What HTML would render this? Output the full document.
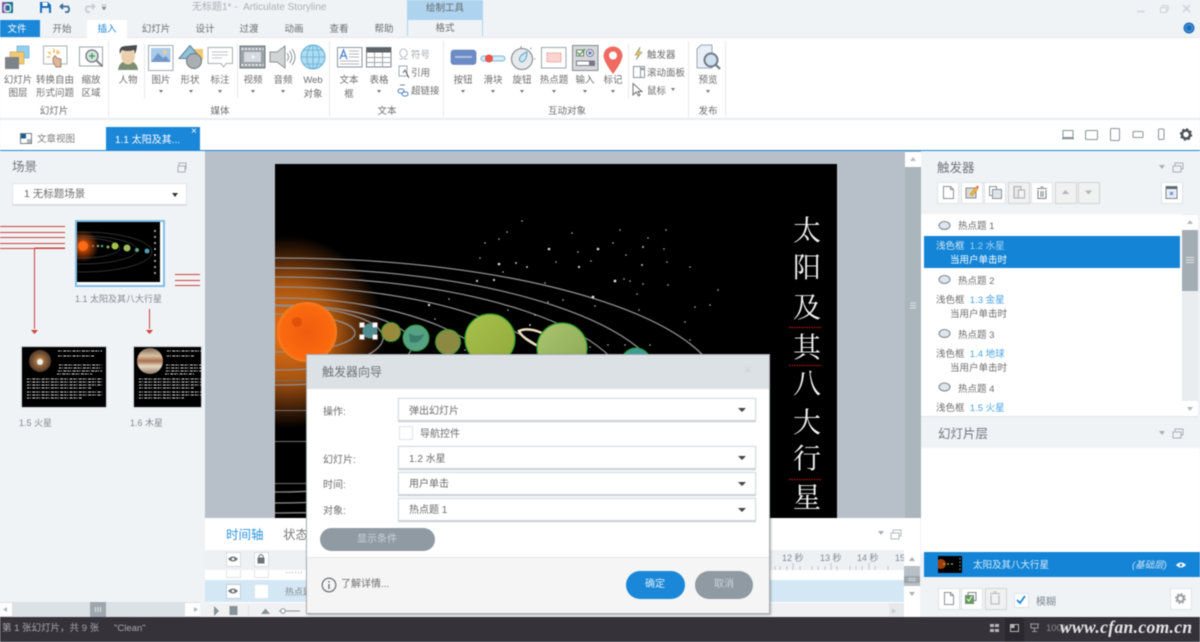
<!DOCTYPE html>
<html lang="zh-CN">
<head>
<meta charset="utf-8">
<title>Articulate Storyline</title>
<style>
html,body{margin:0;padding:0;width:1200px;height:642px;overflow:hidden;background:#eff3f6}
#r{position:relative;width:1200px;height:642px;overflow:hidden;font-family:"Liberation Sans","Noto Sans CJK SC",sans-serif;font-size:9.5px;color:#6c6c6c;filter:blur(.45px)}
.b{position:absolute}
.t{position:absolute;white-space:nowrap;line-height:12px;height:12px;margin-top:2px}
.c{transform:translateX(-50%)}
.h{font-size:12.5px;line-height:16px;height:16px;color:#6f767b;margin-top:1px}
.g{color:#a4a8ab}
.car{position:absolute;width:0;height:0;border-left:2px solid transparent;border-right:2px solid transparent;border-top:3px solid #777}
.sel{position:absolute;left:398px;width:356px;background:#fff;border:1px solid #d6dce0;border-bottom:2px solid #ccd3d8;box-shadow:0 0 1px #c8cfd4}
.sel i{position:absolute;right:9px;top:9px;width:0;height:0;border-left:4px solid transparent;border-right:4px solid transparent;border-top:4px solid #444}
.box{position:absolute;top:182px;width:20px;height:20px;background:#fff;border:1px solid #dfe3e6}
.off{background:#f0f1f1;border-color:#d2d5d6}
svg{position:absolute;left:0;top:0;overflow:hidden}
</style>
</head>
<body>
<div id="r">
<!-- chrome backgrounds -->
<div class="b" style="left:0;top:0;width:1200px;height:37px;background:#eff3f6"></div>
<div class="b" style="left:0;top:37px;width:1200px;height:81px;background:#fff;border-top:1px solid #e4e8eb"></div>
<div class="b" style="left:0;top:118px;width:1200px;height:2px;background:#e9ecee"></div>
<div class="b" style="left:0;top:120px;width:1200px;height:30px;background:#fff"></div>
<div class="b" style="left:0;top:150px;width:1200px;height:1px;background:#1a87d8"></div>
<div class="b" style="left:0;top:151px;width:205px;height:466px;background:#f0f3f6"></div>
<div class="b" style="left:205px;top:151px;width:700px;height:367px;background:#b7c0c8"></div>
<div class="b" style="left:921px;top:151px;width:279px;height:466px;background:#eff3f6"></div>
<div class="b" style="left:905px;top:151px;width:16px;height:367px;background:#aab5bc"></div>
<div class="b" style="left:905px;top:152px;width:16px;height:15px;background:#fff"></div>
<div class="b" style="left:0;top:617px;width:1200px;height:25px;background:#35323a"></div>

<!-- quick title -->
<div class="t g" style="left:192px;top:0;font-size:10px;color:#adb1b4">无标题1* -&nbsp; Articulate Storyline</div>
<div class="b" style="left:407px;top:0;width:76px;height:20px;background:#aed3ee"></div>
<div class="t c" style="left:445px;top:1px;color:#62686d">绘制工具</div>
<div class="b" style="left:407px;top:20px;width:74px;height:16px;background:#eff3f6;border:1px solid #aed3ee;border-top:0;border-bottom:0"></div>
<div class="t c" style="left:445px;top:21px">格式</div>

<!-- tabs -->
<div class="b" style="left:0;top:20px;width:40px;height:17px;background:#1a87d8"></div>
<div class="t c" style="left:17px;top:22px;color:#fff">文件</div>
<div class="b" style="left:87px;top:20px;width:40px;height:18px;background:#fff"></div>
<div class="t c" style="left:62px;top:22px">开始</div>
<div class="t c" style="left:107px;top:22px;color:#1a87d8">插入</div>
<div class="t c" style="left:156px;top:22px">幻灯片</div>
<div class="t c" style="left:205px;top:22px">设计</div>
<div class="t c" style="left:249px;top:22px">过渡</div>
<div class="t c" style="left:294px;top:22px">动画</div>
<div class="t c" style="left:339px;top:22px">查看</div>
<div class="t c" style="left:384px;top:22px">帮助</div>

<!-- ribbon labels -->
<div class="t c" style="left:18px;top:73px">幻灯片</div><div class="t c" style="left:18px;top:86px">图层</div>
<div class="t c" style="left:55px;top:73px">转换自由</div><div class="t c" style="left:55px;top:86px">形式问题</div>
<div class="t c" style="left:91px;top:73px">缩放</div><div class="t c" style="left:91px;top:86px">区域</div>
<div class="t c" style="left:54px;top:104px">幻灯片</div>
<div class="t c" style="left:128px;top:73px">人物</div>
<div class="t c" style="left:161px;top:73px">图片</div>
<div class="t c" style="left:190px;top:73px">形状</div>
<div class="t c" style="left:220px;top:73px">标注</div>
<div class="t c" style="left:253px;top:73px">视频</div>
<div class="t c" style="left:283px;top:73px">音频</div>
<div class="t c" style="left:313px;top:73px">Web</div><div class="t c" style="left:313px;top:87px">对象</div>
<div class="t c" style="left:220px;top:104px">媒体</div>
<div class="t c" style="left:349px;top:73px">文本</div><div class="t c" style="left:349px;top:87px">框</div>
<div class="t c" style="left:379px;top:73px">表格</div>
<div class="t g" style="left:411px;top:48px">符号</div>
<div class="t" style="left:411px;top:66px">引用</div>
<div class="t" style="left:411px;top:84px">超链接</div>
<div class="t c" style="left:387px;top:104px">文本</div>
<div class="t c" style="left:463px;top:73px">按钮</div>
<div class="t c" style="left:493px;top:73px">滑块</div>
<div class="t c" style="left:522px;top:73px">旋钮</div>
<div class="t c" style="left:554px;top:73px">热点题</div>
<div class="t c" style="left:585px;top:73px">输入</div>
<div class="t c" style="left:613px;top:73px">标记</div>
<div class="t" style="left:647px;top:48px">触发器</div>
<div class="t" style="left:647px;top:66px">滚动面板</div>
<div class="t" style="left:647px;top:84px">鼠标</div>
<div class="t c" style="left:567px;top:104px">互动对象</div>
<div class="t c" style="left:708px;top:73px">预览</div>
<div class="t c" style="left:708px;top:104px">发布</div>
<i class="car" style="left:159px;top:90px"></i><i class="car" style="left:189px;top:90px"></i><i class="car" style="left:218px;top:90px"></i><i class="car" style="left:251px;top:90px"></i><i class="car" style="left:281px;top:90px"></i><i class="car" style="left:377px;top:90px"></i><i class="car" style="left:461px;top:90px"></i><i class="car" style="left:491px;top:90px"></i><i class="car" style="left:520px;top:90px"></i><i class="car" style="left:552px;top:90px"></i><i class="car" style="left:583px;top:90px"></i><i class="car" style="left:611px;top:90px"></i><i class="car" style="left:671px;top:88px"></i><i class="car" style="left:706px;top:90px"></i>

<!-- tab row -->
<div class="t" style="left:37px;top:132px;color:#7b7b7b">文章视图</div>
<div class="b" style="left:106px;top:127px;width:94px;height:23px;background:#1a87d8"></div>
<div class="t" style="left:115px;top:133px;color:#fff;font-size:10px">1.1 太阳及其...</div>
<div class="t" style="left:191px;top:124px;color:#fff;font-size:10px">×</div>

<!-- top icons svg -->
<svg width="1200" height="150" viewBox="0 0 1200 150">
<!-- separators -->
<g stroke="#e6e9eb" fill="none"><path d="M108.500 41V117M329.500 41V117M443.500 41V117M688.500 41V117M725.500 41V117M144.500 44V98M237.500 44V98M628.500 44V98"/></g>
<!-- logo -->
<rect x="2" y="2" width="11" height="11" fill="#1c6f8e"/><rect x="2" y="2" width="5" height="11" fill="#7c5aa8"/><rect x="4.500" y="4.500" width="6" height="7" fill="none" stroke="#dfe" stroke-width="1.400" rx="2"/>
<!-- save -->
<path d="M40 2H48L51 5V13H40Z" fill="#1a6fb8"/><rect x="42.500" y="2.500" width="5" height="3.500" fill="#fff"/><rect x="42" y="8" width="7" height="5" fill="#e8f1f8"/>
<!-- undo / redo -->
<path d="M63 4L60.500 6.500L63 9M61 6.500H68A4 4 0 0 1 68 12H65" fill="none" stroke="#3d6f96" stroke-width="1.800"/>
<path d="M92 4L94.500 6.500L92 9M94 6.500H87A4 4 0 0 0 87 12H90" fill="none" stroke="#c8ccd0" stroke-width="1.800"/>
<path d="M101.500 5H106.500M102 7H106L104 10Z" fill="#888" stroke="#888" stroke-width=".6"/>
<!-- window btns -->
<path d="M1137 11.500H1144.500" stroke="#cfd3d6" stroke-width="1.500"/>
<rect x="1160.500" y="7.500" width="6" height="5" fill="none" stroke="#cfd3d6"/><path d="M1162.500 7.500V5.500H1168V10.500H1166.500" fill="none" stroke="#cfd3d6"/>
<path d="M1183 5L1190 12M1190 5L1183 12" stroke="#cfd3d6" stroke-width="1.500"/>
<circle cx="1189" cy="28" r="5.500" fill="#1c6fbe"/><circle cx="1189" cy="28" r="3.500" fill="none" stroke="#a9d2f2" stroke-width=".5"/>
<!-- layers -->
<rect x="17" y="46" width="12" height="12" fill="#8fd0f0" stroke="#72a9c6" stroke-width=".7"/>
<rect x="10" y="52" width="14" height="12" fill="#f3c873" stroke="#c9a457" stroke-width=".7"/>
<rect x="5" y="57" width="14" height="12" fill="#7c8489"/>
<!-- convert -->
<rect x="43.500" y="46" width="23.500" height="18" fill="#fff" stroke="#aab0b4"/>
<path d="M54 49V53M48 52L51 54M60 52L57 54M47 57H50M58 50L56.500 53" stroke="#f0a63a" stroke-width="1.200"/>
<path d="M53 58L55 55.500L57 58L61 59V67H56L53 62Z" fill="#dcb79a" stroke="#8b6b52" stroke-width=".7"/>
<!-- zoom -->
<rect x="79.500" y="47" width="23" height="19" fill="#fff" stroke="#9ea4a8"/>
<circle cx="92" cy="56" r="6" fill="#dfe3e6" stroke="#7d858a" stroke-width="1.500"/><path d="M92 53V59M89 56H95" stroke="#3aa655" stroke-width="1.400"/><path d="M96.500 60.500L102.500 66.500" stroke="#7d858a" stroke-width="2"/>
<!-- person -->
<path d="M118 70Q119 61 128 61Q137 61 138 70Z" fill="#7c8f72"/>
<ellipse cx="128" cy="56" rx="7" ry="8.500" fill="#eccfae"/>
<path d="M120 54Q118 46 126 46L137 45Q137 49 135 54L134 50Q127 52 122 50Z" fill="#4a4d50"/>
<!-- image -->
<rect x="148.500" y="45.500" width="24.500" height="25" fill="#fff" stroke="#a3a9ad"/>
<rect x="151" y="48" width="19.500" height="14" fill="#a9cbea"/>
<path d="M151 62L158 53L163 58L166 56L170.500 62Z" fill="#7296c8"/><circle cx="165" cy="52" r="2" fill="#f6c990"/>
<!-- shape -->
<rect x="190" y="49" width="13" height="11" fill="#f3c873"/>
<path d="M190 45.500L179 58.500H201Z" fill="#8ec3dc" stroke="#5d7f91"/>
<circle cx="194" cy="61" r="7.500" fill="#a9afb2" stroke="#6f777c"/>
<!-- callout -->
<path d="M208 47.500H232.500V63.500H226L223.500 67L221 63.500H208Z" fill="#fff" stroke="#a9aeb1"/>
<path d="M212 52H228M212 55H228M212 58H222" stroke="#bfc4c7"/>
<!-- video -->
<rect x="240" y="46" width="25" height="22" fill="#9aa3a8" stroke="#70797e"/>
<rect x="244" y="52" width="17" height="10" fill="#d5dade"/>
<path d="M241.500 49H263.500M241.500 65H263.500" stroke="#fff" stroke-width="1.500" stroke-dasharray="2 1.500"/>
<path d="M252 55L255 57L252 59Z" fill="#fff"/>
<!-- audio -->
<path d="M270 52H277L285 46V68L277 62H270Z" fill="#d0d4d7" stroke="#8a9196"/>
<path d="M287 53Q290 57 287 61M289.500 51Q294 57 289.500 63M292 49Q298 57 292 65" fill="none" stroke="#8a9196"/>
<!-- web -->
<circle cx="313" cy="57" r="12" fill="#aedcf2" stroke="#64aed2"/>
<ellipse cx="313" cy="57" rx="6" ry="12" fill="none" stroke="#64aed2" stroke-width=".8"/>
<path d="M313 45V69M301 57H325M303 50H323M303 64H323" stroke="#64aed2" stroke-width=".8"/>
<!-- textbox -->
<rect x="337.500" y="47.500" width="24.500" height="19.500" fill="#fff" stroke="#8f979c"/>
<path d="M340 59L343.500 50L347 59M341 56H346" fill="none" stroke="#4b84cf" stroke-width="1.300"/>
<path d="M349 51H359M349 54H359M349 57H359M340 61H359M340 64H359" stroke="#9ca3a8" stroke-width=".8"/>
<!-- table -->
<rect x="366.500" y="47.500" width="24.500" height="19.500" fill="#fff" stroke="#80888d"/>
<rect x="366.500" y="47.500" width="24.500" height="5" fill="#5c6266"/>
<path d="M366.500 57.500H391M366.500 62.500H391M374.500 52.500V67M382.500 52.500V67" stroke="#a2a8ac"/>
<!-- omega, cite, link -->
<path d="M399.500 59H402.500V57Q399 55 400 52Q401 49 403.500 49Q406 49 407 52Q408 55 404.500 57V59H407.500" fill="none" stroke="#b8bcbf" stroke-width="1"/>
<rect x="399" y="66" width="8" height="10" fill="#fff" stroke="#8c9398" stroke-width=".8"/><path d="M403 73L405 70L409 78" fill="none" stroke="#555" stroke-width=".9"/>
<rect x="398" y="89" width="6" height="4" rx="2" fill="none" stroke="#4e84bd"/><rect x="402" y="92" width="6" height="4" rx="2" fill="none" stroke="#4e84bd"/><path d="M400 85H405" stroke="#7c8488"/>
<!-- button -->
<rect x="451" y="50" width="25" height="14.500" rx="3" fill="#6d8cc7" stroke="#5873a8" stroke-width=".6"/><path d="M455 57H472" stroke="#c3d0e8" stroke-width="1.500"/>
<!-- slider -->
<rect x="481" y="56" width="24" height="5" rx="2.500" fill="#d7ecf7" stroke="#7bb5d5"/><circle cx="489" cy="58.500" r="4" fill="#e9574e"/>
<!-- dial -->
<circle cx="522" cy="59" r="10.500" fill="#e7eaec" stroke="#8a9297" stroke-width="1.200"/>
<path d="M527 52Q527 60 522 62Q518 61 520 57Q522 54 527 52Z" fill="#cfe6f1" stroke="#5da5c5"/>
<path d="M521 46V48M530 49L531.500 48M534 59H535.500" stroke="#8a9297"/>
<!-- hotspot -->
<rect x="541.500" y="47.500" width="24.500" height="20.500" fill="#fff" stroke="#9ea5aa"/>
<rect x="547" y="53" width="14" height="9" fill="#fbd3cf" stroke="#e98f88" stroke-dasharray="1.500 1"/>
<!-- input -->
<rect x="572.500" y="45.500" width="25.500" height="25" fill="#d5d8da" stroke="#848b90"/>
<rect x="576.500" y="50" width="7" height="6" fill="#fff" stroke="#777"/><path d="M577.500 52L579.500 55L585 49" fill="none" stroke="#4fa24a" stroke-width="1.300"/>
<circle cx="590" cy="53" r="3.500" fill="#fff" stroke="#778"/><circle cx="590" cy="53" r="1.800" fill="#5a7fc0"/>
<rect x="576.500" y="61" width="18" height="4.500" fill="#fff" stroke="#778"/><rect x="589" y="61" width="5.500" height="4.500" fill="#778"/>
<!-- pin -->
<path d="M613 74Q604 62 603.500 56A9.500 9.500 0 0 1 622.500 56Q622 62 613 74Z" fill="#ef6a60"/><circle cx="613" cy="55.500" r="4" fill="#fff"/>
<!-- trigger bolt, panel, cursor -->
<path d="M640 47L635 55H638L636 60L642 52H639Z" fill="#e8c24a" stroke="#8b8f91" stroke-width=".6"/>
<rect x="633.500" y="66.500" width="11" height="11" fill="#fff" stroke="#8c9398"/><path d="M640.500 66.500V77.500" stroke="#8c9398"/><rect x="641" y="68" width="3" height="2" fill="#8c9398"/>
<path d="M633 83.500V95L636 92L638.500 96L640 95L638 91.500H642Z" fill="#fff" stroke="#666" stroke-width=".9"/>
<!-- preview -->
<path d="M697 49L701 45H712V68H697Z" fill="#e9eff6" stroke="#9aa8b8"/>
<circle cx="711" cy="60" r="6.500" fill="#cfe0f0" stroke="#6f7c86" stroke-width="2"/><path d="M715.500 64.500L720 69" stroke="#6f7c86" stroke-width="2.200"/>
<!-- story view icon -->
<rect x="20.500" y="133.500" width="11" height="10" fill="#fff" stroke="#778087"/><rect x="21" y="134" width="5" height="4.500" fill="#1a5c8c"/><rect x="27" y="139" width="4" height="4" fill="#aeb4b8"/>
<!-- device icons -->
<g fill="none" stroke="#8a9298">
<rect x="1063" y="130.500" width="10" height="7"/><path d="M1062 138.500H1074" stroke-width="1.500"/>
<rect x="1085.500" y="130.500" width="12" height="9" rx="1"/>
<rect x="1110.500" y="128.500" width="9" height="12" rx="1"/>
<rect x="1133" y="131.500" width="10" height="6" rx="1"/>
<rect x="1158.500" y="129" width="5.500" height="10.500" rx="1"/></g>
<g transform="translate(1186,134.500)"><circle r="4" fill="none" stroke="#4c5358" stroke-width="2.500"/><circle r="5.500" fill="none" stroke="#4c5358" stroke-width="1.500" stroke-dasharray="2.200 2.120"/></g>
</svg>

<!-- LEFT: scenes -->
<div class="t h" style="left:12px;top:158px">场景</div>
<svg width="205" height="470" viewBox="0 0 205 470" style="left:0;top:151px">
<rect x="179" y="12" width="7" height="6" fill="none" stroke="#aab1b6"/><rect x="178" y="15" width="7" height="6" fill="#f0f3f6" stroke="#aab1b6"/>
<g stroke="#c8403c" fill="none">
<path d="M0 75.500H65M0 81.500H65M0 86.500H65M0 92.500H65M0 97.500H65"/>
<path d="M34.500 97H65M34.500 97V178"/>
<path d="M175 123.500H200M175 129.500H200M175 134.500H200"/>
<path d="M149.500 158V178"/></g>
<path d="M31 179H38L34.500 183Z M146 179H153L149.500 183Z" fill="#c9423d"/>
</svg>
<div class="b" style="left:12px;top:183px;width:173px;height:20px;background:#fff;border:1px solid #dfe4e8;border-bottom:2px solid #d9dee2"></div>
<div class="t" style="left:24px;top:186px;font-size:10.500px">1 无标题场景</div>
<div class="b" style="left:172px;top:193px;width:0;height:0;border-left:3px solid transparent;border-right:3px solid transparent;border-top:4px solid #333"></div>

<div class="b" style="left:75px;top:220px;width:86px;height:63px;border:2px solid #7fbde8;background:#fff"></div>
<svg width="83" height="60" viewBox="0 0 83 60" style="left:77px;top:222px;background:#000">
<defs><radialGradient id="gl"><stop offset="0" stop-color="#ff6a10"/><stop offset=".4" stop-color="#a13c05"/><stop offset="1" stop-color="#000"/></radialGradient></defs>
<circle cx="6" cy="24" r="16" fill="url(#gl)"/><circle cx="6" cy="24" r="5" fill="#ff6a14"/>
<g fill="none" stroke="#5c5c5c" stroke-width=".5"><ellipse cx="5" cy="30" rx="70" ry="20"/><ellipse cx="5" cy="28" rx="55" ry="14"/><ellipse cx="5" cy="26" rx="38" ry="10"/></g>
<circle cx="16" cy="24" r="1" fill="#69a"/><circle cx="21" cy="24" r="1.200" fill="#9a7"/><circle cx="25" cy="24" r="1.300" fill="#4a8"/><circle cx="31" cy="25" r="1.500" fill="#9a5"/><circle cx="38" cy="24" r="3.500" fill="#a4c24a"/><circle cx="50" cy="26" r="3.500" fill="#9fbd5c"/><circle cx="60" cy="28" r="2" fill="#5aaa8a"/><circle cx="70" cy="29" r="2.500" fill="#4f9fae"/>
<path d="M78 8V52" stroke="#ccc" stroke-width="1.500" stroke-dasharray="2 4"/>
</svg>
<div class="t" style="left:75px;top:291px;font-size:9px;color:#83898d">1.1 太阳及其八大行星</div>

<svg width="84" height="60" viewBox="0 0 84 60" style="left:22px;top:347px;background:#000;outline:1px solid #d5d9dc">
<defs><radialGradient id="mars"><stop offset="0" stop-color="#d8c7a8"/><stop offset=".4" stop-color="#9c6b3e"/><stop offset="1" stop-color="#4f3a28"/></radialGradient><linearGradient id="jup" x2="0" y2="1"><stop offset="0" stop-color="#7c6a58"/><stop offset=".3" stop-color="#d9c2a2"/><stop offset=".5" stop-color="#a86f52"/><stop offset=".7" stop-color="#e6d9c3"/><stop offset="1" stop-color="#8c7a68"/></linearGradient></defs>
<circle cx="18" cy="14" r="11" fill="url(#mars)"/><circle cx="18" cy="15" r="3" fill="#eee"/>
<g stroke="#ddd" stroke-width="1" stroke-dasharray="2 .8 1 1.500 3 1" fill="none"><path d="M36 4H80M36 9H72M37 18H80M37 21H80M36 24H80M35 27H70M5 32H80M5 35H80M5 38H80M5 41H70M5 45H80M5 48H80M5 51H60"/></g>
</svg>
<svg width="67" height="60" viewBox="0 0 67 60" style="left:134px;top:347px;background:#000;outline:1px solid #d5d9dc">
<circle cx="16" cy="14" r="13" fill="url(#jup)"/>
<g stroke="#ddd" stroke-width="1" stroke-dasharray="2 .8 1 1.500 3 1" fill="none"><path d="M33 4H67M33 9H60M32 18H67M32 21H67M32 24H67M31 27H60M5 32H67M5 35H67M5 38H67M5 41H60M5 45H67M5 48H67M5 51H50"/></g>
</svg>
<div class="t" style="left:19px;top:415px;font-size:9px;color:#83898d">1.5 火星</div>
<div class="t" style="left:130px;top:415px;font-size:9px;color:#83898d">1.6 木星</div>

<!-- left scrollbar -->
<div class="b" style="left:0;top:602px;width:200px;height:15px;background:#dce1e5"></div>
<div class="b" style="left:0;top:603px;width:12px;height:13px;background:#fff"></div>
<div class="b" style="left:185px;top:603px;width:15px;height:13px;background:#fff"></div>
<div class="b" style="left:90px;top:602px;width:16px;height:15px;background:#9da7ad"></div>
<svg width="205" height="15" viewBox="0 0 205 15" style="left:0;top:602px"><path d="M3 7.500L7 5V10Z M194 5L198 7.500L194 10Z" fill="#b0b5b8"/><path d="M95.500 5V10M98 5V10M100.500 5V10" stroke="#e4e8ea"/></svg>

<!-- STAGE -->
<svg width="562" height="354" viewBox="275 164 562 354" style="left:275px;top:164px;background:#000">
<defs>
<radialGradient id="glow" gradientUnits="userSpaceOnUse" cx="288" cy="332" r="96"><stop offset="0" stop-color="#e8741a"/><stop offset=".5" stop-color="#a8540f"/><stop offset=".75" stop-color="#50270a"/><stop offset="1" stop-color="#000"/></radialGradient>
<radialGradient id="sun" cx=".5" cy=".5" r=".5"><stop offset="0" stop-color="#f05c10"/><stop offset=".88" stop-color="#fb6a0e"/><stop offset="1" stop-color="#f47f22"/></radialGradient>
<linearGradient id="p5" x2="1" y2="1"><stop offset="0" stop-color="#a9c24c"/><stop offset="1" stop-color="#8fa83a"/></linearGradient>
<linearGradient id="p6" x2="1" y2="1"><stop offset="0" stop-color="#acc46e"/><stop offset="1" stop-color="#88a855"/></linearGradient>
</defs>
<circle cx="288" cy="332" r="96" fill="url(#glow)"/>
<g fill="none" stroke="#8d8d8d" stroke-width="1.300">
<ellipse cx="280" cy="395" rx="442" ry="137"/>
<ellipse cx="280" cy="395" rx="386" ry="127"/>
<ellipse cx="280" cy="395" rx="349" ry="118"/>
<ellipse cx="280" cy="395" rx="290" ry="108"/>
<ellipse cx="280" cy="395" rx="227" ry="97"/>
<ellipse cx="280" cy="345" rx="132" ry="40"/>
<ellipse cx="280" cy="338" rx="103" ry="32"/>
<ellipse cx="280" cy="333" rx="75" ry="19"/>
</g>
<path d="M275 380.500H306M275 410.500H306M275 441.500H306M275 483.500H306" stroke="#6f6f6f"/>
<g fill="#bdbdbd">
<circle cx="522" cy="221" r=".8"/><circle cx="507" cy="232" r=".8"/><circle cx="485" cy="243" r=".8"/><circle cx="499" cy="239" r=".8"/><circle cx="572" cy="233" r=".8"/><circle cx="620" cy="230" r=".8"/><circle cx="666" cy="230" r=".8"/><circle cx="648" cy="238" r=".8"/><circle cx="613" cy="243" r=".8"/><circle cx="549" cy="249" r="1.300" fill="#ddd"/><circle cx="578" cy="252" r=".8"/><circle cx="598" cy="249" r="1.300" fill="#ddd"/><circle cx="643" cy="247" r="1"/><circle cx="664" cy="249" r=".8"/><circle cx="626" cy="255" r=".8"/><circle cx="480" cy="258" r=".8"/><circle cx="499" cy="264" r="1.300" fill="#ddd"/><circle cx="516" cy="263" r="1"/><circle cx="527" cy="267" r="1"/><circle cx="556" cy="262" r=".8"/><circle cx="579" cy="267" r="1.200"/><circle cx="591" cy="261" r=".8"/><circle cx="642" cy="265" r="1"/><circle cx="667" cy="262" r=".8"/><circle cx="690" cy="267" r=".8"/><circle cx="503" cy="272" r=".8"/><circle cx="545" cy="283" r=".8"/><circle cx="624" cy="279" r=".8"/><circle cx="477" cy="281" r="1.200"/><circle cx="494" cy="280" r="1.200"/><circle cx="615" cy="281" r="1.400" fill="#ddd"/><circle cx="630" cy="281" r=".8"/><circle cx="643" cy="284" r=".8"/><circle cx="668" cy="285" r=".8"/><circle cx="718" cy="290" r=".8"/><circle cx="593" cy="297" r="1.400" fill="#ddd"/><circle cx="637" cy="294" r=".8"/><circle cx="429" cy="305" r="1.200" fill="#ddd"/><circle cx="449" cy="299" r=".8"/><circle cx="548" cy="302" r=".8"/><circle cx="563" cy="300" r=".8"/><circle cx="595" cy="306" r=".8"/><circle cx="639" cy="310" r=".8"/><circle cx="695" cy="307" r=".8"/><circle cx="710" cy="305" r=".8"/><circle cx="508" cy="310" r=".8"/><circle cx="435" cy="319" r=".8"/><circle cx="535" cy="315" r=".8"/><circle cx="685" cy="322" r=".8"/><circle cx="530" cy="325" r="1"/><circle cx="590" cy="347" r=".8"/><circle cx="608" cy="345" r=".8"/><circle cx="625" cy="345" r=".8"/><circle cx="650" cy="345" r=".8"/><circle cx="690" cy="340" r=".8"/><circle cx="465" cy="350" r=".8"/>
</g>
<circle cx="307" cy="332" r="30" fill="url(#sun)"/>
<circle cx="297" cy="322" r="5" fill="#d44a0a" opacity=".7"/>
<circle cx="370" cy="331" r="7.500" fill="#4f8d90"/>
<g fill="#fff" stroke="#888" stroke-width=".5"><rect x="359.500" y="322.500" width="5" height="5"/><rect x="372.500" y="322.500" width="5" height="5"/><rect x="359.500" y="334.500" width="5" height="5"/><rect x="372.500" y="334.500" width="5" height="5"/></g>
<circle cx="391" cy="332" r="9.500" fill="#9a8a3c" stroke="#2e9a2f" stroke-width="1"/>
<circle cx="416" cy="338" r="13" fill="#56a084" stroke="#2e9a2f" stroke-width="1"/><path d="M409 333Q417 338 424 334Q420 345 410 342Z" fill="#2c6f5e" opacity=".7"/>
<circle cx="448" cy="342" r="12.500" fill="#8c8a42" stroke="#2e9a2f" stroke-width="1"/>
<circle cx="490" cy="339" r="25" fill="url(#p5)" stroke="#2e9a2f" stroke-width="1.300"/>
<path d="M542 333Q528 327 519 331Q522 338 538 346" fill="none" stroke="#efdfc0" stroke-width="2.500"/>
<circle cx="562" cy="348" r="25" fill="url(#p6)" stroke="#2e9a2f" stroke-width="1.300"/>
<circle cx="636" cy="363" r="15" fill="#3a9c96" stroke="#2e9a2f"/>
<g fill="none" stroke="#b01818" stroke-width="1.300" stroke-dasharray="1.500 1"><path d="M789 327.500H822M789 365.500H822M789 479.500H822"/></g>
<g font-family="'Noto Serif CJK SC','Liberation Serif',serif" font-size="28" fill="#f4f4f4" text-anchor="middle">
<text x="807" y="240">太</text><text x="807" y="277">阳</text><text x="807" y="317">及</text><text x="807" y="357">其</text><text x="807" y="393">八</text><text x="807" y="432">大</text><text x="807" y="468">行</text><text x="807" y="507">星</text>
</g>
</svg>
<svg width="16" height="367" viewBox="0 0 16 367" style="left:905px;top:151px"><path d="M5 10L8 6L11 10Z" fill="#bbb"/><path d="M5 152H11M5 154.500H11M5 157H11" stroke="#dfe3e6"/></svg>

<!-- TIMELINE -->
<div class="b" style="left:205px;top:518px;width:715px;height:99px;background:#fff"></div>
<div class="t" style="left:226px;top:525px;font-size:12.500px;line-height:16px;height:16px;color:#2e95df">时间轴</div>
<div class="t" style="left:283px;top:525px;font-size:12.500px;line-height:16px;height:16px;color:#777">状态</div>
<div class="b" style="left:205px;top:550px;width:700px;height:20px;background:#eef1f4"></div>
<div class="b" style="left:205px;top:580px;width:700px;height:22px;background:#d4e7f5"></div>
<div class="b" style="left:205px;top:603px;width:700px;height:14px;background:#eff1f3"></div>
<div class="b" style="left:226px;top:552px;width:13px;height:13px;background:#fff;border:1px solid #d6dce0"></div>
<div class="b" style="left:254px;top:552px;width:13px;height:13px;background:#fff;border:1px solid #d6dce0"></div>
<div class="b" style="left:226px;top:570px;width:13px;height:7px;background:#fff;border:1px solid #e1e4e6;border-top:0"></div>
<div class="b" style="left:254px;top:570px;width:13px;height:7px;background:#fff;border:1px solid #e1e4e6;border-top:0"></div>
<div class="b" style="left:226px;top:584px;width:13px;height:13px;background:#fff;border:1px solid #c3ced6"></div>
<div class="b" style="left:254px;top:584px;width:13px;height:13px;background:#fff;border:1px solid #dce5ec"></div>
<div class="t" style="left:285px;top:562px;font-size:9px;color:#999">……</div>
<div class="t" style="left:285px;top:584px;font-size:9px;color:#888">热点题</div>
<div class="t" style="left:782px;top:550px;font-size:9px;color:#7f8a92">12 秒</div>
<div class="t" style="left:820px;top:550px;font-size:9px;color:#7f8a92">13 秒</div>
<div class="t" style="left:857px;top:550px;font-size:9px;color:#7f8a92">14 秒</div>
<div class="t" style="left:895px;top:550px;font-size:9px;color:#7f8a92">15</div>
<div class="b" style="left:904px;top:550px;width:16px;height:67px;background:#fff"></div>
<div class="b" style="left:904px;top:566px;width:16px;height:20px;background:#b7c0c6"></div>
<div class="b" style="left:904px;top:576px;width:16px;height:7px;background:#9aa4ab"></div>
<div class="b" style="left:889px;top:603px;width:15px;height:14px;background:#e6e9eb"></div>
<svg width="1200" height="642" viewBox="0 0 1200 642" style="left:0;top:0">
<path d="M878 531H884L881 535Z" fill="#a7afb4"/>
<rect x="893" y="530" width="8" height="6" fill="none" stroke="#b3b9bd"/><rect x="891" y="533" width="8" height="6" fill="#fff" stroke="#b3b9bd"/>
<path d="M775 566V570M780 566V570M793 563V570M787 566V570M800 566V570M812 566V570M831 563V570M818 566V570M825 566V570M837 566V570M850 566V570M869 563V570M856 566V570M862 566V570M875 566V570M888 566V570" stroke="#c2c7ca"/>
<path d="M909 561L912 557L915 561Z M909 592H915L912 596Z" fill="#aab0b4"/>
<path d="M908 578.500H916M908 580.500H916" stroke="#d3d7da"/>
<path d="M892 608.500L896 611L892 613.500Z" fill="#c3c7ca"/>
<!-- eyes and lock -->
<g fill="#6d7479"><path d="M228 559Q233 554 238 559Q233 564 228 559Z"/><path d="M228 591Q233 586 238 591Q233 596 228 591Z"/><rect x="257.500" y="557.500" width="7" height="6"/><path d="M259 557.500V556Q261 553 263 556V557.500" fill="none" stroke="#6d7479"/></g>
<circle cx="233" cy="559" r="1.300" fill="#fff"/><circle cx="233" cy="591" r="1.300" fill="#fff"/>
<!-- playback -->
<path d="M214 606L219 611L214 616Z" fill="#8a9297"/><rect x="229.500" y="606" width="8" height="9" fill="#8a9297"/>
<path d="M261 614L265.500 608.500L270 614Z" fill="#8a9297"/>
<circle cx="283" cy="611" r="2.300" fill="#fff" stroke="#8a9297"/><path d="M279 611H280.500M285 611H300" stroke="#8a9297"/>
<path d="M248.500 605V616" stroke="#dfe2e4"/>
<path d="M306 610H330" stroke="#c8cdd0" stroke-width="2"/>
</svg>

<!-- RIGHT: triggers -->
<div class="t h" style="left:937px;top:159px">触发器</div>
<div class="box" style="left:937px"></div><div class="box" style="left:961px"></div><div class="box" style="left:984px"></div><div class="box off" style="left:1008px"></div><div class="box" style="left:1031px"></div><div class="box off" style="left:1055px"></div><div class="box off" style="left:1078px"></div><div class="box" style="left:1161px"></div>
<svg width="1200" height="215" viewBox="0 0 1200 215" style="left:0;top:0">
<path d="M1159 165H1165L1162 169Z" fill="#a7afb4"/>
<rect x="1175" y="163" width="8" height="6" fill="none" stroke="#aab1b6"/><rect x="1173" y="166" width="8" height="6" fill="#eff3f6" stroke="#aab1b6"/>
<path d="M943.500 186.500H950.500L953.500 189.500V198.500H943.500Z M950.500 186.500V189.500H953.500" fill="#fff" stroke="#8a9297"/>
<rect x="966" y="188" width="10" height="10" fill="#d9dbd2" stroke="#888"/><path d="M970 194L976 187L978 189L972 196Z" fill="#f3b63c" stroke="#99702a" stroke-width=".5"/><circle cx="977.500" cy="187" r="1.200" fill="#e7635b"/>
<rect x="989.500" y="186.500" width="7" height="9" fill="#fff" stroke="#8a9297"/><rect x="992.500" y="189.500" width="9" height="9" fill="#dfe4ea" stroke="#8a9297"/>
<rect x="1014" y="186.500" width="7" height="11.500" fill="#e7e8e8" stroke="#a9aeb1"/><rect x="1018.500" y="190" width="6" height="8" fill="#f4f4f4" stroke="#a9aeb1"/>
<path d="M1037 188.500H1047M1038 190V198.500H1046V190M1040.500 187H1043.500M1041 191V197M1043 191V197" fill="none" stroke="#7c858a" stroke-width="1.100"/>
<path d="M1062 194L1065.500 190L1069 194Z M1085 190.500H1092L1088.500 194.500Z" fill="#b0b5b8"/>
<rect x="1166" y="186.500" width="11" height="12" fill="#e8ecf6" stroke="#7c858a"/><rect x="1166" y="186.500" width="11" height="2.500" fill="#60686d"/><path d="M1170 192L1173 195M1173 192L1170 195" stroke="#5a7fc0"/>
</svg>

<div class="b" style="left:921px;top:214px;width:277px;height:202px;background:#fff;overflow:hidden;border-bottom:1px solid #e2e6e9">
<div class="b" style="left:3px;top:22px;width:256px;height:32px;background:#1485d6"></div>
<svg width="30" height="200" viewBox="0 0 30 200" style="left:16px;top:0">
<g fill="#dde6ef" stroke="#79838c"><ellipse cx="7.500" cy="11.500" rx="5.500" ry="4"/><ellipse cx="7.500" cy="65.500" rx="5.500" ry="4"/><ellipse cx="7.500" cy="119.500" rx="5.500" ry="4"/><ellipse cx="7.500" cy="173" rx="5.500" ry="4"/></g></svg>
<div class="t" style="left:37px;top:5px">热点题 1</div>
<div class="t" style="left:15px;top:25px;color:#d3e8f7">浅色框 <span style="color:#a3d2f3">&nbsp;1.2 水星</span></div>
<div class="t" style="left:29px;top:39px;color:#fff">当用户单击时</div>
<div class="t" style="left:37px;top:60px">热点题 2</div>
<div class="t" style="left:15px;top:79px">浅色框 <span style="color:#4aa3e2">&nbsp;1.3 金星</span></div>
<div class="t" style="left:29px;top:93px">当用户单击时</div>
<div class="t" style="left:37px;top:114px">热点题 3</div>
<div class="t" style="left:15px;top:133px">浅色框 <span style="color:#4aa3e2">&nbsp;1.4 地球</span></div>
<div class="t" style="left:29px;top:147px">当用户单击时</div>
<div class="t" style="left:37px;top:168px">热点题 4</div>
<div class="t" style="left:15px;top:187px">浅色框 <span style="color:#4aa3e2">&nbsp;1.5 火星</span></div>
<div class="b" style="left:261px;top:0;width:16px;height:202px;background:#e9edf0"></div>
<div class="b" style="left:261px;top:1px;width:16px;height:15px;background:#fff"></div>
<div class="b" style="left:261px;top:16px;width:16px;height:61px;background:#a3adb3"></div>
<div class="b" style="left:261px;top:187px;width:16px;height:15px;background:#fff"></div>
<svg width="16" height="202" viewBox="0 0 16 202" style="left:261px;top:0"><path d="M5 10L8 6L11 10Z M5 193H11L8 197Z" fill="#b4b9bc"/><path d="M3 43.500H11M3 46H11M3 48.500H11" stroke="#dfe3e6" transform="translate(1,0)"/></svg>
</div>

<!-- layers -->
<div class="t h" style="left:938px;top:425px">幻灯片层</div>
<svg width="1200" height="642" viewBox="0 0 1200 642" style="left:0;top:0">
<path d="M1159 431H1165L1162 435Z" fill="#a7afb4"/>
<rect x="1175" y="429" width="8" height="6" fill="none" stroke="#aab1b6"/><rect x="1173" y="432" width="8" height="6" fill="#eff3f6" stroke="#aab1b6"/>
</svg>
<div class="b" style="left:921px;top:448px;width:279px;height:105px;background:#fff"></div>
<div class="b" style="left:924px;top:552px;width:276px;height:25px;background:#1485d6"></div>
<svg width="24" height="17" viewBox="0 0 24 17" style="left:938px;top:556px;background:#000"><circle cx="3" cy="8" r="5" fill="#a33d08"/><path d="M5 8H17" stroke="#9aa84a" stroke-dasharray="2 2" stroke-width="1.500"/><path d="M22 2V15" stroke="#aaa" stroke-dasharray="1.500 2"/></svg>
<div class="t" style="left:973px;top:558px;color:#d9ecfa">太阳及其八大行星</div>
<div class="t" style="left:1132px;top:558px;color:#cbe3f6;font-style:italic">(基础层)</div>
<svg width="1200" height="642" viewBox="0 0 1200 642" style="left:0;top:0">
<path d="M1176 565Q1181 560 1186 565Q1181 570 1176 565Z" fill="#fff"/><circle cx="1181" cy="565" r="1.300" fill="#1485d6"/>
</svg>
<div class="b" style="left:938px;top:588px;width:20px;height:20px;background:#fff;border:1px solid #dfe3e6"></div>
<div class="b" style="left:961px;top:588px;width:20px;height:20px;background:#fff;border:1px solid #dfe3e6"></div>
<div class="b" style="left:985px;top:588px;width:20px;height:20px;background:#f0f1f1;border:1px solid #d2d5d6"></div>
<div class="b" style="left:1014px;top:593px;width:13px;height:13px;background:#fff;border:1px solid #dfe3e6"></div>
<div class="t" style="left:1036px;top:595px;color:#7e8890;font-size:10px">模糊</div>
<div class="b" style="left:1170px;top:588px;width:20px;height:20px;background:#fff;border:1px solid #dfe3e6"></div>
<svg width="1200" height="642" viewBox="0 0 1200 642" style="left:0;top:0">
<path d="M944.500 592.500H950.500L953.500 595.500V604.500H944.500Z M950.500 592.500V595.500H953.500" fill="#fff" stroke="#8a9297"/>
<rect x="968" y="592.500" width="8" height="8" fill="#fff" stroke="#7c858a"/><rect x="965.500" y="595.500" width="8" height="8" fill="#5ca04d" stroke="#7c858a"/><path d="M967 599L969 601L972 596" fill="none" stroke="#fff"/>
<path d="M990 593.500H1000M991 595V604H999V595M993.500 592H996.500" fill="none" stroke="#b3b7ba" stroke-width="1.100"/>
<path d="M1017 600L1020 603L1025 596" fill="none" stroke="#1a87d8" stroke-width="1.800"/>
<g transform="translate(1180.500,598.500)"><circle r="3.200" fill="none" stroke="#9aa1a6" stroke-width="2.200"/><circle r="4.800" fill="none" stroke="#9aa1a6" stroke-width="1.300" stroke-dasharray="2 1.770"/></g>
</svg>

<!-- DIALOG -->
<div class="b" style="left:306px;top:354px;width:462px;height:258px;background:#fff;border:1px solid #a9adb0;box-shadow:1px 1px 2px rgba(0,0,0,.3)"></div>
<div class="b" style="left:307px;top:355px;width:462px;height:34px;background:#dce1e5"></div>
<div class="b" style="left:307px;top:557px;width:462px;height:55px;background:#f5f5f5;border-top:1px solid #e4e6e7"></div>
<div class="t" style="left:322px;top:363px;font-size:12px;line-height:14px;height:14px;color:#6d7378">触发器向导</div>
<div class="t" style="left:744px;top:362px;font-size:13px;color:#cdd2d5">×</div>
<div class="t" style="left:323px;top:405px;font-size:10px">操作:</div>
<div class="sel" style="top:398px;height:21px"><i></i></div>
<div class="t" style="left:409px;top:404px;font-size:10px">弹出幻灯片</div>
<div class="b" style="left:399px;top:426px;width:12px;height:12px;background:#fff;border:1px solid #dfe2e4"></div>
<div class="t" style="left:420px;top:427px;font-size:10px">导航控件</div>
<div class="t" style="left:323px;top:453px;font-size:10px">幻灯片:</div>
<div class="sel" style="top:446px;height:21px"><i></i></div>
<div class="t" style="left:409px;top:452px;font-size:10px">1.2 水星</div>
<div class="t" style="left:323px;top:478px;font-size:10px">时间:</div>
<div class="sel" style="top:472px;height:21px"><i></i></div>
<div class="t" style="left:409px;top:477px;font-size:10px">用户单击</div>
<div class="t" style="left:323px;top:504px;font-size:10px">对象:</div>
<div class="sel" style="top:498px;height:21px"><i></i></div>
<div class="t" style="left:409px;top:503px;font-size:10px">热点题 1</div>
<div class="b" style="left:320px;top:528px;width:115px;height:23px;background:#8f9aa3;border-radius:12px"></div>
<div class="t c" style="left:377px;top:532px;font-size:10px;color:#ced3d8">显示条件</div>
<svg width="20" height="20" viewBox="0 0 20 20" style="left:321px;top:577px"><circle cx="8" cy="8" r="6.800" fill="none" stroke="#5d666c" stroke-width="1.100"/><path d="M8 7V12M8 4V5.500" stroke="#5d666c" stroke-width="1.300"/></svg>
<div class="t" style="left:341px;top:577px;font-size:10px">了解详情...</div>
<div class="b" style="left:626px;top:571px;width:59px;height:28px;background:#1a87d8;border-radius:14px"></div>
<div class="t c" style="left:655px;top:577px;font-size:10px;color:#dcedf9">确定</div>
<div class="b" style="left:695px;top:571px;width:58px;height:28px;background:#8f9aa3;border-radius:14px"></div>
<div class="t c" style="left:724px;top:577px;font-size:10px;color:#cfd4d8">取消</div>

<!-- STATUS -->
<div class="t" style="left:2px;top:621px;color:#a8a8aa">第 1 张幻灯片，共 9 张</div>
<div class="t" style="left:114px;top:621px;color:#a8a8aa;font-size:9.500px">"Clean"</div>
<div class="b" style="left:1005px;top:618px;width:19px;height:24px;background:#2b282f"></div>
<svg width="1200" height="642" viewBox="0 0 1200 642" style="left:0;top:0">
<g fill="#b8b8b8"><rect x="990" y="624" width="4" height="3"/><rect x="995" y="624" width="4" height="3"/><rect x="990" y="629" width="4" height="3"/><rect x="995" y="629" width="4" height="3"/></g>
<rect x="1010.500" y="624.500" width="8" height="7" fill="none" stroke="#b8b8b8"/><rect x="1011" y="625" width="3.500" height="3" fill="#b8b8b8"/>
<path d="M1030 624H1039M1031 624V628H1038V624M1034.500 628V631M1032 631.500H1037" fill="none" stroke="#9a9a9a"/>
</svg>
<div class="t" style="left:1046px;top:621px;color:#8f8f90">100%</div>
<div class="t" style="left:1060px;top:616px;font-family:'Liberation Serif',serif;font-style:italic;font-weight:bold;font-size:17.500px;line-height:18px;height:18px;color:#e4e4e4;letter-spacing:.35px">www.cfan.com.cn</div>
</div>
</body>
</html>
